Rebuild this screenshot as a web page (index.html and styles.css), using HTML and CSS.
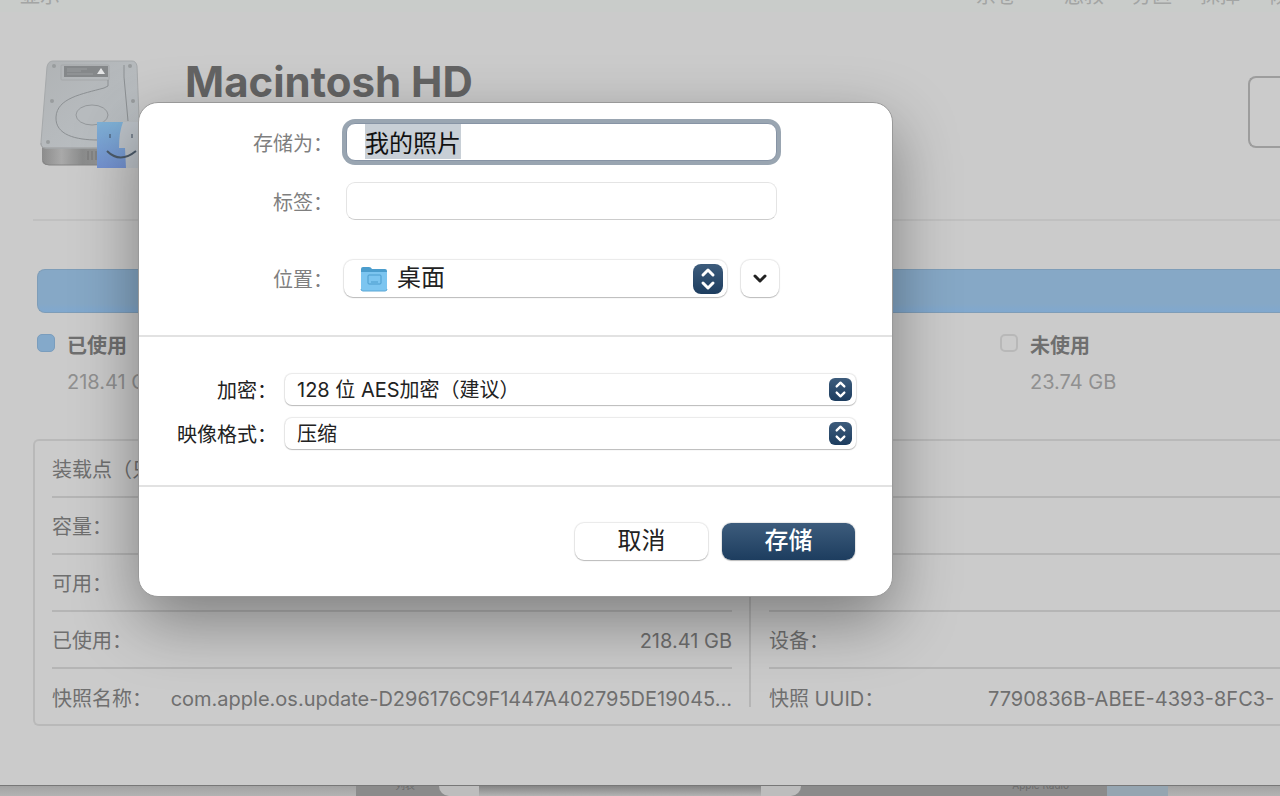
FILE: index.html
```html
<!DOCTYPE html>
<html lang="zh-CN">
<head>
    <meta charset="UTF-8">
    <meta name="viewport" content="width=device-width, initial-scale=1.0">
    <title>磁盘工具</title>
    <link rel="stylesheet" href="styles.css">
</head>
<body>
    <div class="window">
        <div class="toolbar">
            <span class="tool-view">显示</span>
            <span class="tool-volume">宗卷</span>
            <span>急救</span>
            <span>分区</span>
            <span>抹掉</span>
            <span>恢复</span>
        </div>
        <div class="volume">
            <svg class="disk" viewBox="0 0 100 110" aria-hidden="true">
                <defs>
                    <linearGradient id="plate" x1="0" y1="0" x2="1" y2="1">
                        <stop offset="0" stop-color="#b0b3b5"/>
                        <stop offset="1" stop-color="#bcc1c5"/>
                    </linearGradient>
                    <linearGradient id="front" x1="0" y1="0" x2="1" y2="0">
                        <stop offset="0" stop-color="#8c8c8c"/>
                        <stop offset=".2" stop-color="#a9a9a9"/>
                        <stop offset=".42" stop-color="#8b8c8c"/>
                        <stop offset="1" stop-color="#a4a4a4"/>
                    </linearGradient>
                    <linearGradient id="face" x1="0" y1="0" x2="0" y2="1">
                        <stop offset="0" stop-color="#7fb1d6"/>
                        <stop offset="1" stop-color="#7492d1"/>
                    </linearGradient>
                </defs>
                <path d="M2 86h97v15q0 4-5 4H8q-6 0-6-5z" fill="url(#front)"/>
                <path d="M3 101q1 4 6 4h55" fill="none" stroke="#858585" stroke-width="1"/>
                <path d="M48 91v9M52 91v9M56 91v9" stroke="#777" stroke-width="1"/>
                <path d="M13 1h79q4 0 5 5l3 78q0 4-5 4H6q-6 0-5-6L7 7q1-6 6-6z" fill="url(#plate)" stroke="#a6a9ab" stroke-width="1"/>
                <path d="M1 83q0 5 5 5h90" fill="none" stroke="#a2a5a7" stroke-width="1"/>
                <rect x="21" y="5" width="48" height="15" rx="1" fill="none" stroke="#a5a8aa"/>
                <rect x="24" y="6" width="44" height="11" fill="#85888a"/>
                <path d="M27 9h20M27 11h14M27 14h26" stroke="#999c9e" stroke-width="1"/>
                <path d="M57 14l4-6 4 6z" fill="#e4e5e6"/>
                <path d="M68 20v6l-4 2C42 34 17 38 16 57c-1 18 20 23 42 23M84 5v12l4 44" fill="none" stroke="#8c9093" stroke-width="1"/>
                <ellipse cx="52" cy="55" rx="16" ry="10" fill="#b8bcbf" stroke="#95999c"/>
                <g fill="#999c9e"><circle cx="14" cy="6" r="2"/><circle cx="90" cy="6" r="2"/><circle cx="12" cy="41" r="2"/><circle cx="93" cy="41" r="2"/><circle cx="8" cy="82" r="2"/></g>
                <path d="M57 62h43v46H57z" fill="url(#face)"/>
                <path d="M83 62h17v46H86l-1-20h-6q0-16 4-26z" fill="#bec4ca"/>
                <path d="M70 74v4M92 74v4" stroke="#3e4d5e" stroke-width="1"/>
                <path d="M67 91q13 13 29 0" fill="none" stroke="#4d5c6b" stroke-width="2"/>
            </svg>
            <h1>Macintosh HD</h1>
            <div class="capacity"></div>
        </div>
        <div class="bar"></div>
        <div class="legend">
            <div class="legend-item">
                <i class="swatch used"></i>
                <div><b>已使用</b><span>218.41 GB</span></div>
            </div>
            <div class="legend-item">
                <i class="swatch"></i>
                <div><b>未使用</b><span>23.74 GB</span></div>
            </div>
        </div>
        <div class="info">
            <table class="info-left">
                <tr><th>装载点（只读）：</th><td></td></tr>
                <tr><th>容量：</th><td></td></tr>
                <tr><th>可用：</th><td></td></tr>
                <tr><th>已使用：</th><td>218.41 GB</td></tr>
                <tr><th>快照名称：</th><td>com.apple.os.update-D296176C9F1447A402795DE19045...</td></tr>
            </table>
            <table class="info-right">
                <tr><th></th><td></td></tr>
                <tr><th></th><td></td></tr>
                <tr><th></th><td></td></tr>
                <tr><th>设备：</th><td></td></tr>
                <tr><th>快照 UUID：</th><td>7790836B-ABEE-4393-8FC3-</td></tr>
            </table>
        </div>
    </div>
    <div class="behind">
        <div class="behind-side"></div>
        <div class="behind-dark">列表</div>
        <div class="behind-panel"></div>
        <div class="behind-dark wide">Apple Radio</div>
        <div class="behind-blue"></div>
        <div class="behind-end"></div>
    </div>

    <form class="dialog">
        <div class="section file">
            <label for="name">存储为：</label>
            <input class="name" id="name" type="text" value="我的照片">
            <label for="tags">标签：</label>
            <input id="tags" type="text">
            <label for="place">位置：</label>
            <div class="place-row">
                <div class="select place">
                    <svg class="folder" viewBox="0 0 28 26" aria-hidden="true">
                        <path d="M1 3q0-2 2-2h6q2 0 3 2h13q2 0 2 2v6H1z" fill="#4b9dcd"/>
                        <path d="M1 6h26v17q0 2-2 2H3q-2 0-2-2z" fill="#7cc5f0"/>
                        <path d="M1 23q0 2 2 2h22q2 0 2-2" fill="none" stroke="#5aa7d6"/>
                        <rect x="8" y="9" width="13" height="9" rx="1" fill="none" stroke="#4a9ccd"/>
                        <path d="M11 16h7" stroke="#4a9ccd"/>
                    </svg>
                    <select id="place"><option>桌面</option></select>
                    <svg class="knob" viewBox="0 0 30 30" aria-hidden="true"><path d="M10 11l5-5 5 5M10 19l5 5 5-5"/></svg>
                </div>
                <button class="expand" type="button" aria-label="展开">
                    <svg viewBox="0 0 14 10" aria-hidden="true"><path d="M2 3l5 5 5-5"/></svg>
                </button>
            </div>
        </div>
        <div class="section image">
            <label for="crypt">加密：</label>
            <div class="select">
                <select id="crypt"><option>128 位 AES加密（建议）</option></select>
                <svg class="knob" viewBox="0 0 30 30" aria-hidden="true"><path d="M10 11l5-5 5 5M10 19l5 5 5-5"/></svg>
            </div>
            <label for="format">映像格式：</label>
            <div class="select">
                <select id="format"><option>压缩</option></select>
                <svg class="knob" viewBox="0 0 30 30" aria-hidden="true"><path d="M10 11l5-5 5 5M10 19l5 5 5-5"/></svg>
            </div>
        </div>
        <div class="actions">
            <button type="button">取消</button>
            <button class="save" type="submit">存储</button>
        </div>
    </form>
    <script src="main.js"></script>
</body>
</html>
```

FILE: styles.css
```css
*{
    box-sizing: border-box;
}
html,body{
    margin: 0;
    height: 100%;
    overflow: hidden;
}
body{
    position: relative;
    display: flex;
    flex-direction: column;
    background: #b0b0b0;
    color: #6f6f6f;
    font: 20px/24px Inter,"Noto Sans CJK SC",sans-serif;
}
input,select,button{
    font: inherit;
    color: #222;
}

/* main window */
.window{
    flex: 1;
    overflow: hidden;
    background: #cbcbcb;
    border-bottom: 1px solid #777;
}
.toolbar{
    display: flex;
    align-items: flex-end;
    height: 12px;
    padding: 0 0 4px 20px;
    gap: 28px;
    background: #c9ccca;
    color: #a3a5a4;
    white-space: nowrap;
    overflow: hidden;
}
.toolbar span{
    flex: none;
}
.tool-view{
    margin-right: auto;
}
.tool-volume{
    margin-right: 20px;
}
.toolbar span:last-child{
    width: 12px;
}
.volume{
    display: flex;
    align-items: flex-start;
    height: 209px;
    margin-left: 33px;
    padding: 48px 0 0 7px;
    border-bottom: 2px solid #c0c0c0;
}
.disk{
    width: 100px;
    height: 110px;
}
h1{
    margin: 0 0 0 45px;
    color: #646464;
    font-size: 42px;
    line-height: 44px;
    font-weight: 700;
}
.capacity{
    width: 32px;
    height: 72px;
    margin: 16px 0 0 auto;
    border: 2px solid #9d9d9d;
    border-right: 0;
    border-radius: 8px 0 0 8px;
}
.bar{
    height: 44px;
    margin: 48px 0 0 37px;
    border: 1px solid #7e9db8;
    border-right: 0;
    border-radius: 8px 0 0 8px;
    background: linear-gradient(#86a8c6,#86a8c6 80%,#80a8cf);
}
.legend{
    display: grid;
    grid-template-columns: 963px 1fr;
    padding: 21px 0 0 37px;
}
.legend-item{
    display: flex;
    gap: 12px;
}
.swatch{
    width: 18px;
    height: 18px;
    border: 2px solid #b8b8b8;
    border-radius: 5px;
}
.used{
    border: 1px solid #7a9dbd;
    background: #84a9ca;
}
.legend b,.legend span{
    display: block;
}
.legend b{
    font-weight: 700;
}
.legend span{
    margin-top: 12px;
    color: #909090;
}
.info{
    display: flex;
    height: 287px;
    margin: 45px 0 0 33px;
    border: 2px solid #b9b9b9;
    border-right: 0;
    border-radius: 6px 0 0 6px;
}
.info table{
    table-layout: fixed;
    border-collapse: separate;
    border-spacing: 0;
    white-space: nowrap;
}
.info th,.info td{
    height: 57px;
    padding: 2px 0 0;
    border-bottom: 2px solid #b5b5b5;
}
.info tr:last-child th,.info tr:last-child td{
    border-bottom: 0;
}
.info th{
    font-weight: 400;
    text-align: left;
}
.info-left{
    flex: none;
    width: 680px;
    margin: 0 17px;
}
.info-left th{
    width: 100px;
}
.info-left td{
    text-align: right;
}
.info-right{
    flex: 1;
    padding-left: 20px;
    background: linear-gradient(#b5b5b5,#b5b5b5) 0 16px / 2px 250px no-repeat;
}
.info-right th{
    width: 219px;
}

/* strip of the windows behind */
.behind{
    display: flex;
    height: 10px;
    background: #8b8b8b;
    overflow: hidden;
}
.behind-side{
    width: 356px;
    background: linear-gradient(#a3a3a3,#b3b3b3);
}
.behind-dark{
    display: flex;
    align-items: flex-end;
    justify-content: flex-end;
    width: 83px;
    padding: 0 24px 5px 0;
    color: #6c6c6c;
    font-size: 10px;
    line-height: 12px;
}
.behind-panel{
    width: 362px;
    border-radius: 0 0 12px 12px;
    border: solid #bdbdbd;
    border-width: 0 40px;
    background: linear-gradient(#858585,#b3b3b3);
}
.wide{
    width: 306px;
    padding-right: 38px;
}
.behind-blue{
    width: 61px;
    background: #95a5b1;
}
.behind-end{
    flex: 1;
    background: linear-gradient(#a3a3a3,#b3b3b3);
}

/* save dialog */
.dialog{
    position: absolute;
    top: 102px;
    left: 138px;
    width: 755px;
    border: 1px solid #999;
    border-radius: 20px;
    background: #fff;
    box-shadow: 0 24px 64px rgba(0,0,0,.38);
}
.section{
    display: grid;
    align-items: center;
    border-bottom: 2px solid #e2e2e2;
}
.section label{
    padding-top: 2px;
    text-align: right;
}
.file{
    grid-template-columns: 194px 431px;
    grid-template-rows: 38px 38px 38px;
    row-gap: 21px;
    column-gap: 13px;
    padding: 20px 0 56px;
    color: #7f7f7f;
}
.file label{
    padding-top: 4px;
}
.file input{
    width: 100%;
    height: 38px;
    padding: 0 18px 2px;
    border: 1px solid #e4e4e4;
    border-bottom-color: #ccc;
    border-radius: 9px;
    outline: 0;
    background: #fff;
    font-size: 24px;
}
.file .name{
    border-color: #8794a5;
    box-shadow: 0 0 0 4px #99a5b1;
}
.name::selection{
    background: #c8cfd6;
    color: #111;
}
.file label:nth-of-type(3),.place-row{
    margin-top: 36px;
}
.place-row{
    display: flex;
    gap: 14px;
    margin-left: -2px;
    margin-right: -2px;
}
.select{
    position: relative;
    flex: 1;
}
.select select{
    display: block;
    width: 100%;
    height: 31px;
    padding: 0 12px;
    appearance: none;
    border: 0;
    border-radius: 7px;
    background: #fff;
    box-shadow: 0 0 1px 1px rgba(0,0,0,.09),0 1px 1px rgba(0,0,0,.2);
}
.place .folder + select{
    height: 37px;
    padding: 0 53px;
    border-radius: 9px;
    font-size: 24px;
}
.folder{
    position: absolute;
    top: 6px;
    left: 16px;
    width: 28px;
    height: 26px;
}
.knob{
    position: absolute;
    top: 4px;
    right: 4px;
    width: 23px;
    height: 23px;
    border-radius: 6px;
    background: linear-gradient(#3d5c7c,#1d3d5f);
    pointer-events: none;
}
.place .knob{
    width: 30px;
    height: 30px;
    border-radius: 8px;
}
.knob path,.expand path{
    fill: none;
    stroke: #fff;
    stroke-width: 3;
    stroke-linecap: round;
    stroke-linejoin: round;
}
.expand{
    width: 38px;
    padding: 0;
    border: 0;
    border-radius: 9px;
    background: #fff;
    box-shadow: 0 0 1px 1px rgba(0,0,0,.09),0 1px 1px rgba(0,0,0,.2);
}
.expand svg{
    display: block;
    width: 14px;
    margin: 0 auto;
}
.expand path{
    stroke: #222;
}
.image{
    grid-template-columns: 138px 571px;
    gap: 13px 8px;
    padding: 37px 0 36px;
    color: #222;
}
.actions{
    display: flex;
    justify-content: flex-end;
    gap: 14px;
    padding: 36px 37px;
}
.actions button{
    width: 133px;
    height: 37px;
    padding: 0 0 2px;
    border: 0;
    border-radius: 9px;
    background: #fff;
    box-shadow: 0 0 1px 1px rgba(0,0,0,.09),0 1px 1px rgba(0,0,0,.2);
    font-size: 24px;
}
.actions .save{
    background: linear-gradient(#3d5c7c,#1d3d5f);
    color: #fff;
    font-weight: 500;
}
```

FILE: main.js
```js
var nameInput = document.getElementById('name');
nameInput.focus();
nameInput.select();
```
